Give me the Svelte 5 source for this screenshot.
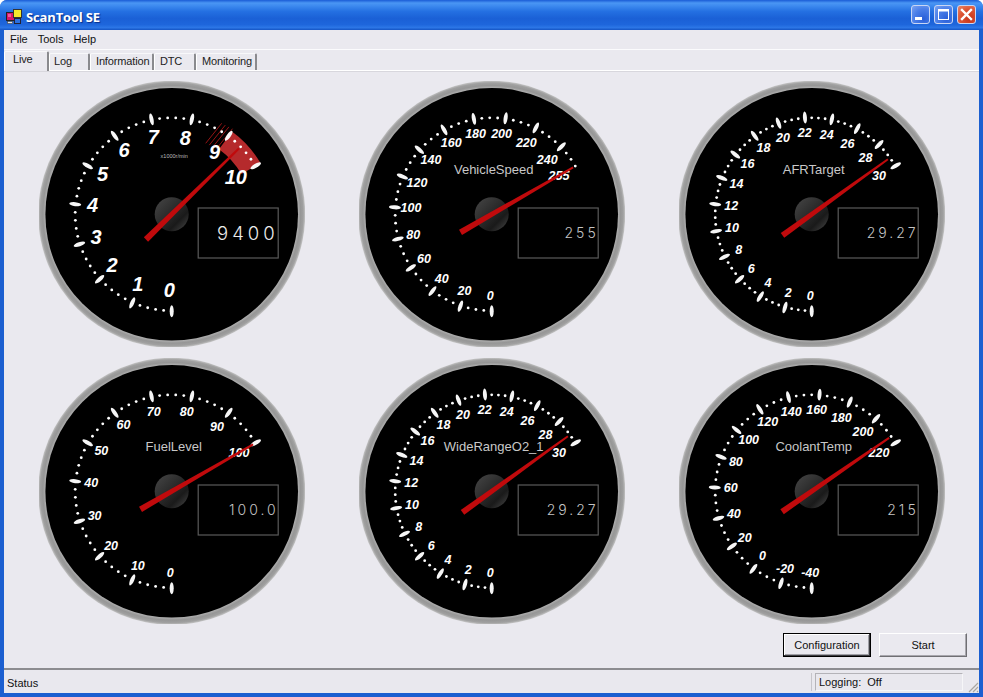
<script>
  const SWEEP = 240;
  const gauges = [
    { name: '', unit: 'x1000r/min', min: 0, max: 10, step: 1, sub: 5, value: 9.4, readout: '9400', big: true, redFrom: 9 },
    { name: 'VehicleSpeed', min: 0, max: 255, step: 20, sub: 4, value: 255, readout: '255', extra: 255 },
    { name: 'AFRTarget', min: 0, max: 30, step: 2, sub: 4, value: 29.27, readout: '29.27' },
    { name: 'FuelLevel', min: 0, max: 100, step: 10, sub: 5, value: 100, readout: '100.0' },
    { name: 'WideRangeO2_1', min: 0, max: 30, step: 2, sub: 4, value: 29.27, readout: '29.27' },
    { name: 'CoolantTemp', min: -40, max: 220, step: 20, sub: 4, value: 215, readout: '215' }
  ];

  const rad = (d) => (d * Math.PI) / 180;
  const angleOf = (g, v) => 180 + ((v - g.min) / (g.max - g.min)) * SWEEP;
  const px = (a, r) => +(Math.sin(rad(a)) * r).toFixed(2);
  const py = (a, r) => +(-Math.cos(rad(a)) * r).toFixed(2);

  function range(g, inc) {
    const out = [];
    for (let v = g.min; v <= g.max + 1e-6; v += inc) out.push(+v.toFixed(4));
    return out;
  }
  const majors = (g) => range(g, g.step);
  const minors = (g) => {
    const inc = g.step / g.sub;
    return range(g, inc).filter((v) => Math.abs(((v - g.min) / g.step) % 1) > 1e-3);
  };
  const labels = (g) => (g.extra ? [...majors(g), g.extra] : majors(g));
  const labelX = (g, v) => {
    const a = angleOf(g, v);
    return g.big ? px(a, 77) - 2.5 : px(a, 79.5) - 1.5;
  };
  const labelY = (g, v) => {
    const a = angleOf(g, v);
    const drop = 3 * Math.max(0, Math.sin(rad(a)));
    return g.big ? py(a, 77.5) - 1.5 + drop : py(a, 81.5) - 0.5 + drop;
  };

  function needle(g) {
    const a = angleOf(g, g.value);
    const n = a - 90;
    const cx = Math.cos(rad(n));
    const sy = Math.sin(rad(n));
    const pts = [
      [-36, -3], [-36, 3], [94, 1], [94, -1]
    ];
    return pts.map(([l, w]) => `${(l * cx - w * sy).toFixed(2)},${(l * sy + w * cx).toFixed(2)}`).join(' ');
  }

  function sector(g) {
    const a0 = angleOf(g, g.redFrom), a1 = angleOf(g, g.max), r0 = 80.5, r1 = 102.5;
    return `M${px(a0, r0)} ${py(a0, r0)} L${px(a0, r1)} ${py(a0, r1)} A${r1} ${r1} 0 0 1 ${px(a1, r1)} ${py(a1, r1)} L${px(a1, r0)} ${py(a1, r0)} A${r0} ${r0} 0 0 0 ${px(a0, r0)} ${py(a0, r0)} Z`;
  }

  const hatch = [0, 1, 2, 3];
  const tabs = ['Live', 'Log', 'Information', 'DTC', 'Monitoring'];
  const menus = ['File', 'Tools', 'Help'];
</script>

<div class="window">
  <header class="titlebar">
    <svg class="appicon" width="16" height="16" viewBox="0 0 16 16" aria-hidden="true">
      <rect x="0.5" y="3.5" width="8" height="8" fill="#d8146a" stroke="#222"/>
      <rect x="2" y="5" width="3" height="3" fill="#f05a9a"/>
      <rect x="7.5" y="0.5" width="8" height="8" fill="#f4e82c" stroke="#333"/>
      <rect x="8.5" y="9.5" width="6" height="5" fill="#2a70e0" stroke="#223"/>
      <rect x="1.5" y="12.5" width="5" height="2" fill="#e6e6e6" stroke="#444" stroke-width="0.6"/>
    </svg>
    <span class="title">ScanTool SE</span>
    <div class="winbtns">
      <button class="wb" aria-label="Minimize"><svg width="17" height="17" viewBox="0 0 17 17"><rect x="3" y="11" width="7" height="3" fill="#fff"/></svg></button>
      <button class="wb" aria-label="Maximize"><svg width="17" height="17" viewBox="0 0 17 17"><rect x="3.5" y="3.5" width="10" height="10" fill="none" stroke="#fff"/><rect x="3" y="3" width="11" height="2.5" fill="#fff"/></svg></button>
      <button class="wb close" aria-label="Close"><svg width="17" height="17" viewBox="0 0 17 17"><path d="M4 4l9 9M13 4l-9 9" stroke="#fff" stroke-width="2.4" stroke-linecap="square"/></svg></button>
    </div>
  </header>

  <div class="body">
    <nav class="menubar">
      {#each menus as m}<span class="menu">{m}</span>{/each}
    </nav>

    <div class="tabstrip">
      {#each tabs as t, i}
        <div class="tab" class:active={i === 0}>{t}</div>
      {/each}
    </div>

    <main class="page">
      <div class="grid">
        {#each gauges as g}
          <svg class="gauge" width="266" height="266" viewBox="-132.7 -133.3 266 266">
            <defs>
              <radialGradient id="bezel" cx="0.5" cy="0.5" r="0.5">
                <stop offset="0.945" stop-color="#b0b0b0"/>
                <stop offset="0.965" stop-color="#969696"/>
                <stop offset="0.985" stop-color="#a0a0a0"/>
                <stop offset="1" stop-color="#c4c4c4"/>
              </radialGradient>
              <linearGradient id="hub" x1="0" y1="0" x2="1" y2="1">
                <stop offset="0" stop-color="#474747"/>
                <stop offset="0.45" stop-color="#2b2b2b"/>
                <stop offset="0.7" stop-color="#1a1a1a"/>
                <stop offset="1" stop-color="#4a4a4a"/>
              </linearGradient>
            </defs>
            <circle r="133.5" fill="url(#bezel)"/>
            <circle r="126.3" fill="#000"/>

            {#if g.redFrom}
              <path d={sector(g)} fill="#b52a2c"/>
              {#each hatch as k}
                <line x1={34 + 3.6 * k} y1={-71 + 1.8 * k} x2={50 + 3.6 * k} y2={-91 + 1.8 * k} stroke="#a81616" stroke-width="0.9"/>
              {/each}
            {/if}

            {#each labels(g) as v}
              <text class="num" class:big={g.big} x={labelX(g, v)} y={labelY(g, v)} text-anchor="middle" dy=".36em">{v}</text>
            {/each}

            {#each minors(g) as v}
              {@const a = angleOf(g, v)}
              <circle cx={px(a, 96.5)} cy={py(a, 96.5)} r="1.4" fill="#fff"/>
            {/each}
            {#each majors(g) as v}
              <ellipse rx="2" ry="6" cy="-97" fill="#f6f6f6" transform="rotate({angleOf(g, v)})"/>
            {/each}

            {#if g.name}<text class="name" x="2" y="-40" text-anchor="middle">{g.name}</text>{/if}
            {#if g.unit}<text class="unit" x="2.5" y="-56" text-anchor="middle">{g.unit}</text>{/if}

            <circle r="17" fill="url(#hub)"/>
            <polygon points={needle(g)} fill="#c00a0c"/>

            <rect x="26.5" y="-6.3" width="80" height="50" fill="#000" stroke="#5a5a5a" stroke-width="1.2"/>
            <text class="readout" class:big={g.big} x="107" y={g.big ? 25.3 : 24} text-anchor="end">{g.readout}</text>
          </svg>
        {/each}
      </div>

      <div class="actions">
        <button class="btn default">Configuration</button>
        <button class="btn">Start</button>
      </div>
    </main>

    <footer class="status">
      <div class="panel main">Status</div>
      <div class="panel log">Logging:&nbsp; Off</div>
      <svg class="grip" width="12" height="12" viewBox="0 0 12 12" aria-hidden="true">
        <path d="M11 2L2 11M11 6L6 11M11 10L10 11" stroke="#a9a7a0" stroke-width="1.2"/>
      </svg>
    </footer>
  </div>
</div>

<style>
  :global(body) {
    margin: 0;
    background: #fff;
  }
  .window {
    width: 983px;
    height: 697px;
    display: flex;
    flex-direction: column;
    box-sizing: border-box;
    overflow: hidden;
    border-radius: 7px 7px 0 0;
    background: #1c5fd0;
    font-family: "Liberation Sans", Arial, sans-serif;
    font-size: 11px;
    color: #111;
  }
  .titlebar {
    height: 30px;
    flex: none;
    display: flex;
    align-items: center;
    box-sizing: border-box;
    padding: 3px 7px 0 6px;
    gap: 4px;
    background: linear-gradient(180deg, #1a5cd6 0%, #4a96f4 10%, #3f8cf0 18%, #2470e2 38%, #1a60d6 62%, #1e66dc 82%, #2c76e6 92%, #1454c4 100%);
  }
  .appicon {
    flex: none;
  }
  .title {
    font-family: "Open Sans", "DejaVu Sans", sans-serif;
    font-weight: 700;
    font-size: 13px;
    letter-spacing: -0.15px;
    color: #fff;
    text-shadow: 1px 1px 1px #0a2f8a;
    flex: 1;
  }
  .winbtns {
    display: flex;
    gap: 4px;
    margin-top: -5px;
  }
  .wb {
    width: 19px;
    height: 19px;
    padding: 0;
    border: 1px solid #c9d6f4;
    border-radius: 3px;
    box-sizing: border-box;
    background: radial-gradient(circle at 70% 75%, #2a5fd8 0%, #4a7ee8 55%, #7ba4f2 100%);
    display: block;
  }
  .wb svg {
    display: block;
  }
  .close {
    background: radial-gradient(circle at 70% 75%, #c6341a 0%, #dc5434 55%, #eb8a6a 100%);
  }
  .body {
    flex: 1;
    min-height: 0;
    margin: 0 4px 4px;
    display: flex;
    flex-direction: column;
    background: #eae9ef;
  }
  .menubar {
    height: 20px;
    flex: none;
    display: flex;
    align-items: center;
    gap: 10px;
    padding: 0 0 1px 6px;
    border-bottom: 1px solid #fbfbfd;
    box-sizing: border-box;
    font-size: 11px;
  }
  .tabstrip {
    height: 21px;
    flex: none;
    display: flex;
    align-items: flex-end;
    box-sizing: border-box;
    border-bottom: 1px solid #fff;
    box-shadow: 0 1px 0 #d8d7dd;
    padding-top: 1px;
    font-size: 11px;
    letter-spacing: -0.15px;
  }
  .tab {
    height: 17px;
    line-height: 15px;
    box-sizing: border-box;
    padding: 0 5px 0 5px;
    border-left: 1px solid #fff;
    border-right: 2px solid #8a8a8e;
    border-top: 1px solid #f8f8fa;
    border-radius: 2px 2px 0 0;
    white-space: nowrap;
    color: #222;
  }
  .tab:nth-child(2) {
    width: 41px;
    padding-left: 4px;
  }
  .tab:nth-child(3) {
    width: 64px;
  }
  .tab:nth-child(4) {
    width: 42px;
  }
  .tab:nth-child(5) {
    width: 61px;
  }
  .tab.active {
    width: 45px;
    height: 20px;
    line-height: 14px;
    margin-bottom: -1px;
    padding-left: 8px;
    background: #eae9ef;
    z-index: 1;
  }
  .page {
    flex: 1;
    min-height: 0;
    display: flex;
    flex-direction: column;
    padding: 10px 0 0 35px;
  }
  .grid {
    display: grid;
    grid-template-columns: repeat(3, 320px);
    row-gap: 11px;
  }
  .gauge {
    display: block;
  }
  .num {
    font: italic 700 12.5px "Liberation Sans", Arial, sans-serif;
    fill: #fff;
  }
  .num.big {
    font-size: 20px;
  }
  .name {
    font: 400 13px "Liberation Sans", Arial, sans-serif;
    fill: #c8c8c8;
  }
  .unit {
    font: 400 5.5px "Liberation Sans", Arial, sans-serif;
    fill: #bcbcbc;
  }
  .readout {
    font-family: Inter, "Liberation Sans", sans-serif;
    font-weight: 300;
    font-size: 14px;
    letter-spacing: 3px;
    fill: #c4c4c4;
  }
  .readout.big {
    font-size: 18.5px;
    letter-spacing: 4px;
    fill: #ececec;
  }
  .actions {
    display: flex;
    justify-content: flex-end;
    gap: 8px;
    margin-top: 9px;
    padding-right: 12px;
  }
  .btn {
    width: 88px;
    height: 24px;
    padding: 0;
    box-sizing: border-box;
    font: 11px "Liberation Sans", Arial, sans-serif;
    color: #111;
    background: #eae9ef;
    border: 1px solid;
    border-color: #fff #6f6f73 #6f6f73 #fff;
    box-shadow: inset -1px -1px 0 #a8a7ad;
  }
  .btn.default {
    border: 1px solid #000;
    box-shadow: inset -1px -1px 0 #3c3c40, inset 1px 1px 0 #fff, inset -2px -2px 0 #a0a0a6;
  }
  .status {
    height: 25px;
    flex: none;
    margin-top: auto;
    display: flex;
    align-items: center;
    box-sizing: border-box;
    border-top: 2px solid #8c8c90;
    background: #e9e8ee;
    position: relative;
    font-size: 11px;
  }
  .panel {
    height: 18px;
    line-height: 20px;
    box-sizing: border-box;
    white-space: nowrap;
    overflow: hidden;
    margin-top: 1px;
  }
  .main {
    width: 808px;
    padding-left: 3px;
    border-right: 1px solid #c6c5cb;
  }
  .log {
    width: 148px;
    margin-left: 3px;
    padding-left: 3px;
    line-height: 17px;
    border: 1px solid #b4b3b8;
    border-bottom-color: #f6f6f8;
    border-right-color: #f6f6f8;
  }
  .grip {
    position: absolute;
    right: 0;
    bottom: 0;
  }
</style>
